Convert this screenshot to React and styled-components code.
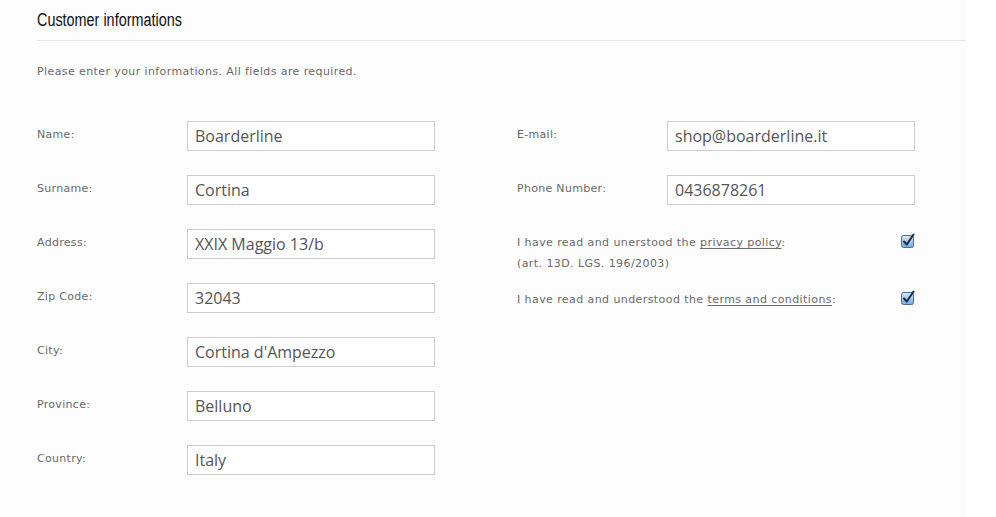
import React from 'react';
import styled, { createGlobalStyle } from 'styled-components';

const GlobalStyle = createGlobalStyle`
  html, body {
    margin: 0;
    padding: 0;
    background: #ffffff;
  }
`;

const Page = styled.div`
  width: 966px;
  height: 517px;
  background: #fdfdfd;
  box-sizing: border-box;
  padding: 0 0 0 37px;
  font-family: "DejaVu Sans", Verdana, sans-serif;
`;

const Header = styled.div`
  width: 929px;
  height: 41px;
  border-bottom: 1px solid #e9e9e9;
  box-sizing: border-box;
  padding-top: 10px;
`;

const Title = styled.h2`
  margin: 0;
  font-family: "Liberation Sans", Arial, sans-serif;
  font-weight: normal;
  font-size: 18px;
  line-height: 21px;
  color: #111111;
  transform: scaleX(0.8);
  transform-origin: left center;
`;

const Intro = styled.p`
  margin: 23px 0 0 0;
  font-size: 11px;
  letter-spacing: 0.4px;
  color: #6a6a6a;
  line-height: 16px;
`;

const Columns = styled.div`
  display: grid;
  grid-template-columns: 480px 449px;
  margin-top: 41px;
`;

const Column = styled.div`
  display: flex;
  flex-direction: column;
  gap: 24px;
`;

const Row = styled.div`
  display: flex;
  align-items: center;
  height: 30px;
`;

const Label = styled.label`
  width: 150px;
  font-size: 11px;
  letter-spacing: 0.3px;
  color: #6a6a6a;
  margin-top: -4px;
`;

const Input = styled.input`
  width: 248px;
  height: 30px;
  box-sizing: border-box;
  border: 1px solid #cdcdcd;
  background: #ffffff;
  padding: 0 7px;
  font-family: "Open Sans", "DejaVu Sans", sans-serif;
  font-size: 16px;
  color: #555555;
  outline: none;
`;

const Agreements = styled.div`
  display: flex;
  flex-direction: column;
  gap: 15px;
  margin-top: 3px;
  width: 398px;
`;

const Agreement = styled.div`
  display: flex;
  justify-content: space-between;
  align-items: flex-start;
`;

const AgreementText = styled.div`
  font-size: 11px;
  letter-spacing: 0.42px;
  line-height: 21px;
  color: #6a6a6a;
`;

const Link = styled.a`
  color: #6a6a6a;
  text-decoration: underline;
  text-underline-offset: 2px;
`;

const Check = styled.span`
  display: inline-flex;
  width: 14px;
  height: 14px;
  margin-top: 1px;
`;

const CheckIcon = () => (
  <Check>
    <svg width="14" height="15" viewBox="0 0 14 15">
      <defs>
        <linearGradient id="cb" x1="0" y1="0" x2="0" y2="1">
          <stop offset="0" stopColor="#d6ebff" />
          <stop offset="1" stopColor="#6fa9e6" />
        </linearGradient>
      </defs>
      <rect x="0.5" y="2.5" width="12" height="12" rx="2" fill="url(#cb)" stroke="#4a6f99" />
      <path d="M3 8.5 L5.8 11.5 L12.5 1.5" fill="none" stroke="#1e2a3a" strokeWidth="2" strokeLinecap="round" strokeLinejoin="round" />
    </svg>
  </Check>
);

const leftFields = [
  ['Name:', 'Boarderline'],
  ['Surname:', 'Cortina'],
  ['Address:', 'XXIX Maggio 13/b'],
  ['Zip Code:', '32043'],
  ['City:', "Cortina d'Ampezzo"],
  ['Province:', 'Belluno'],
  ['Country:', 'Italy'],
];

const rightFields = [
  ['E-mail:', 'shop@boarderline.it'],
  ['Phone Number:', '0436878261'],
];

const Field = ({ label, value }) => (
  <Row>
    <Label>{label}</Label>
    <Input defaultValue={value} />
  </Row>
);

export default function App() {
  return (
    <Page>
      <GlobalStyle />
      <Header>
        <Title>Customer informations</Title>
      </Header>
      <Intro>Please enter your informations. All fields are required.</Intro>
      <Columns>
        <Column>
          {leftFields.map(([l, v]) => (
            <Field key={l} label={l} value={v} />
          ))}
        </Column>
        <Column>
          {rightFields.map(([l, v]) => (
            <Field key={l} label={l} value={v} />
          ))}
          <Agreements>
            <Agreement>
              <AgreementText>
                I have read and unerstood the <Link href="#">privacy policy</Link>:
                <br />
                (art. 13D. LGS. 196/2003)
              </AgreementText>
              <CheckIcon />
            </Agreement>
            <Agreement>
              <AgreementText>
                I have read and understood the <Link href="#">terms and conditions</Link>:
              </AgreementText>
              <CheckIcon />
            </Agreement>
          </Agreements>
        </Column>
      </Columns>
    </Page>
  );
}
